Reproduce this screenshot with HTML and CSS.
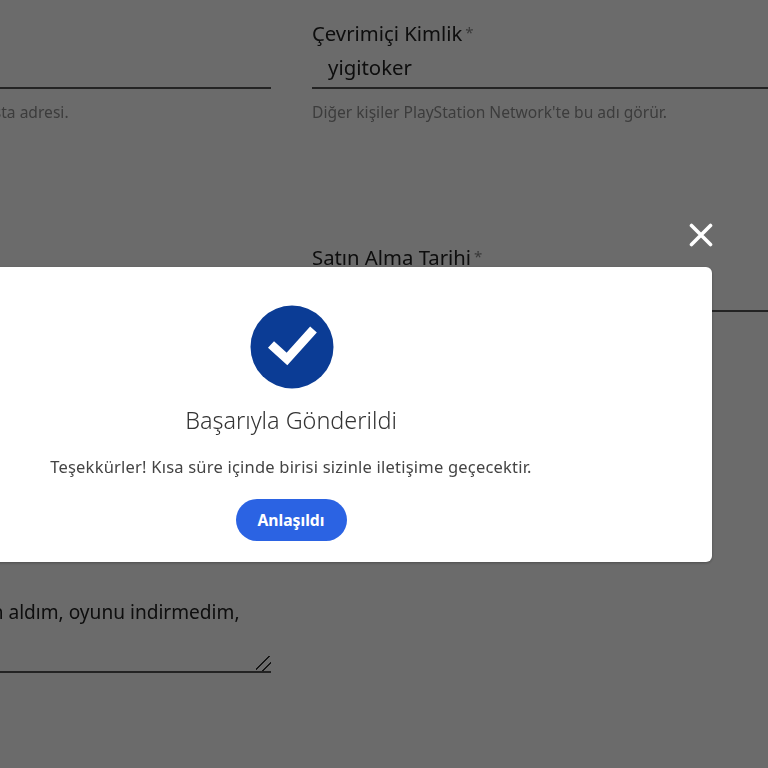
FILE: index.html
```html
<!DOCTYPE html>
<html lang="tr">
<head>
<meta charset="utf-8">
<title>Başarıyla Gönderildi</title>
<link rel="stylesheet" href="styles.css">
</head>
<body>
<main class="form">
  <div class="col col-left">
    <div class="field">
      <label class="label">E-posta<span class="req">*</span></label>
      <input class="input" type="text" value="" readonly>
      <p class="help">Hesabınızın e-posta adresi.</p>
    </div>
    <div class="field field-area">
      <label class="label">Açıklama<span class="req">*</span></label>
      <textarea class="area" readonly>Oyunu satın aldım, oyunu indirmedim,</textarea>
    </div>
  </div>
  <div class="col col-right">
    <div class="field">
      <label class="label">Çevrimiçi Kimlik<span class="req">*</span></label>
      <input class="input" type="text" value="yigitoker" readonly>
      <p class="help">Diğer kişiler PlayStation Network'te bu adı görür.</p>
    </div>
    <div class="field field-date">
      <label class="label">Satın Alma Tarihi<span class="req">*</span></label>
      <input class="input" type="text" value="" readonly>
    </div>
  </div>
</main>

<div class="overlay">
  <div class="dialog-wrap">
    <button class="close" aria-label="Kapat">
      <svg class="close-icon" viewBox="0 0 24 24" width="24" height="24"><path d="M2.5 2.5 L21.5 21.5 M21.5 2.5 L2.5 21.5"/></svg>
    </button>
    <section class="dialog">
      <svg class="check" viewBox="0 0 84 84" width="84" height="84">
        <circle class="check-disc" cx="42" cy="42" r="41.5"/>
        <path class="check-mark" d="M21 39.5 L37 54 L63.5 24.5"/>
      </svg>
      <h2 class="title">Başarıyla Gönderildi</h2>
      <p class="message">Teşekkürler! Kısa süre içinde birisi sizinle iletişime geçecektir.</p>
      <button class="ok">Anlaşıldı</button>
    </section>
  </div>
</div>
</body>
</html>
```

FILE: styles.css
```css
* { box-sizing: border-box; }

html, body {
  margin: 0;
  height: 768px;
  overflow: hidden;
  background: #fff;
}

body {
  font-family: "Noto Sans", "Open Sans", sans-serif;
  color: #222;
}

.form {
  display: grid;
  grid-template-columns: 399px 1fr;
  column-gap: 41px;
  margin-left: -128px;
  padding-top: 19px;
  width: 896px;
  filter: blur(.4px);
}

.col { display: flex; flex-direction: column; }

.field { display: flex; flex-direction: column; }

.field-date { margin-top: 120px; }
.field-date .input { height: 42px; }
.field-area { margin-top: 415px; }

.label {
  font-size: 20.3px;
  line-height: 26px;
  color: #222;
}

.req {
  margin-left: 3px;
  font-size: 15px;
  vertical-align: 3px;
  color: #888;
}

.input {
  display: block;
  width: 100%;
  height: 43px;
  padding: 1px 16px 0;
  border: 0;
  border-bottom: 2px solid #555;
  background: transparent;
  font: 400 20.4px "Noto Sans", sans-serif;
  color: #222;
  outline: none;
}

.help {
  margin: 13px 0 0;
  font-size: 15.6px;
  line-height: 21px;
  color: #8f8f8f;
}

.area {
  display: block;
  width: 100%;
  height: 108px;
  padding: 34px 16px 8px 23px;
  border: 0;
  border-bottom: 2px solid #555;
  background: transparent;
  font: 400 19.1px/26px "Noto Sans", sans-serif;
  color: #222;
  outline: none;
}

.area::-webkit-resizer {
  background: linear-gradient(135deg,
    transparent 42%, #333 42%, #333 50%, transparent 50%,
    transparent 68%, #333 68%, #333 76%, transparent 76%);
}

.overlay {
  position: fixed;
  inset: 0;
  background: rgba(0, 0, 0, .58);
}

.dialog-wrap {
  position: absolute;
  top: 267px;
  left: -130px;
  width: 842px;
}

.close {
  position: absolute;
  top: -44px;
  right: 0;
  width: 24px;
  height: 24px;
  margin-right: -1px;
  padding: 0;
  border: 0;
  background: none;
}

.close-icon { display: block; }
.close-icon path {
  fill: none;
  stroke: #fff;
  stroke-width: 3.6;
  stroke-linecap: round;
}

.dialog {
  display: flex;
  flex-direction: column;
  align-items: center;
  height: 295px;
  padding-top: 38px;
  background: #fff;
  border-radius: 6px;
  text-align: center;
  box-shadow: 0 1px 3px rgba(0, 0, 0, .3);
}

.check { display: block; flex: none; margin-left: 2px; filter: blur(.4px); }
.check-disc { fill: #0b3c95; }
.check-mark {
  fill: none;
  stroke: #fff;
  stroke-width: 9;
}

.title {
  margin: 15px 0 0;
  font-size: 23.4px;
  line-height: 32px;
  font-weight: 300;
  color: #333;
  filter: blur(.3px);
}

.message {
  margin: 20px 0 0;
  font-size: 16.5px;
  line-height: 22px;
  letter-spacing: .21px;
  color: #444;
  filter: blur(.3px);
}

.ok {
  width: 111px;
  height: 42px;
  margin-top: 21px;
  padding: 0;
  border: 0;
  border-radius: 21px;
  background: #2b63e3;
  font: 700 15.7px "Noto Sans", sans-serif;
  color: #fff;
}
```
